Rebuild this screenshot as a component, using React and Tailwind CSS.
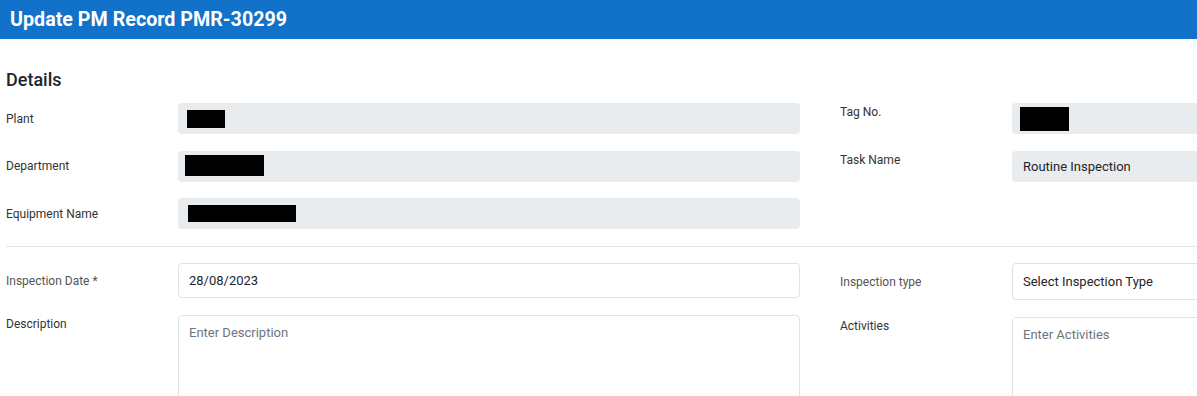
export default function App() {
  const font = { fontFamily: 'Roboto, "Noto Sans", Arial, sans-serif' };
  const Redact = ({ w, h, ml, mb = 0 }) => (
    <div className="bg-black" style={{ width: w, height: h, marginLeft: ml, marginBottom: mb }} />
  );
  return (
    <div className="w-full h-[396px] overflow-hidden bg-white" style={font}>
      <div className="h-[39px] bg-[#1271c9] flex items-center px-[10px]">
        <h1 className="text-white text-[19.7px] font-bold leading-none">Update PM Record PMR-30299</h1>
      </div>
      <div className="pl-[6px] w-[1640px]">
        <h2 className="mt-[30px] mb-[12px] h-[22px] leading-[22px] text-[18px] font-medium text-[#212529]">Details</h2>
        <div className="flex gap-x-[40px]">
          {/* left column */}
          <div className="w-[794px] flex flex-col gap-y-[16.5px]">
            <div className="flex items-center">
              <label className="w-[172px] text-[12px] leading-[16px] text-[#333]">Plant</label>
              <div className="w-[622px] h-[31px] bg-[#e9ecef] rounded-[4px] flex items-center">
                <Redact w={38} h={18} ml={9} />
              </div>
            </div>
            <div className="flex items-center">
              <label className="w-[172px] text-[12px] leading-[16px] text-[#333]">Department</label>
              <div className="w-[622px] h-[31px] bg-[#e9ecef] rounded-[4px] flex items-center">
                <Redact w={79} h={21} ml={7} mb={2} />
              </div>
            </div>
            <div className="flex items-center">
              <label className="w-[172px] text-[12px] leading-[16px] text-[#333]">Equipment Name</label>
              <div className="w-[622px] h-[31px] bg-[#e9ecef] rounded-[4px] flex items-center">
                <Redact w={108} h={17} ml={10} />
              </div>
            </div>
          </div>
          {/* right column */}
          <div className="w-[794px] flex flex-col gap-y-[16.5px]">
            <div className="flex items-start">
              <label className="w-[172px] pt-[1px] text-[12px] leading-[16px] text-[#333]">Tag No.</label>
              <div className="w-[622px] h-[31px] bg-[#e9ecef] rounded-[4px] flex items-center">
                <Redact w={49} h={24} ml={8} />
              </div>
            </div>
            <div className="flex items-start">
              <label className="w-[172px] pt-[1px] text-[12px] leading-[16px] text-[#333]">Task Name</label>
              <div className="w-[622px] h-[31px] bg-[#e9ecef] rounded-[4px] flex items-center px-[11px] pt-[1px] text-[13px] text-[#212529]">
                Routine Inspection
              </div>
            </div>
          </div>
        </div>
        <div className="mt-[16.5px] h-px bg-[#e6e6e6]" />
        <div className="mt-[16px] flex gap-x-[40px]">
          <div className="w-[794px] flex flex-col gap-y-[17px]">
            <div className="flex items-center">
              <label className="w-[172px] pt-[1px] text-[12px] leading-[16px] text-[#555]">
                Inspection Date <span>*</span>
              </label>
              <div className="w-[622px] h-[35px] border border-[#e2e2e2] rounded-[4px] flex items-center px-[10px] pt-[1px] text-[13px] text-[#212529]">
                28/08/2023
              </div>
            </div>
            <div className="flex items-start">
              <label className="w-[172px] pt-[1px] text-[12px] leading-[16px] text-[#333]">Description</label>
              <textarea
                className="w-[622px] h-[120px] border border-[#e2e2e2] rounded-[4px] px-[10px] pt-[8px] text-[13px] leading-[18px] text-[#212529] placeholder:text-[#6c757d] resize-none outline-none"
                placeholder="Enter Description"
                style={font}
              />
            </div>
          </div>
          <div className="w-[794px] flex flex-col gap-y-[17px]">
            <div className="flex items-center">
              <label className="w-[172px] pt-[1px] text-[12px] leading-[16px] text-[#555]">Inspection type</label>
              <div className="w-[622px] h-[37px] border border-[#e2e2e2] rounded-[4px] flex items-center px-[10px] pt-[1px] text-[13px] text-[#212529]">
                Select Inspection Type
              </div>
            </div>
            <div className="flex items-start">
              <label className="w-[172px] pt-[1px] text-[12px] leading-[16px] text-[#333]">Activities</label>
              <textarea
                className="w-[622px] h-[120px] border border-[#e2e2e2] rounded-[4px] px-[10px] pt-[8px] text-[13px] leading-[18px] text-[#212529] placeholder:text-[#6c757d] resize-none outline-none"
                placeholder="Enter Activities"
                style={font}
              />
            </div>
          </div>
        </div>
      </div>
    </div>
  );
}
